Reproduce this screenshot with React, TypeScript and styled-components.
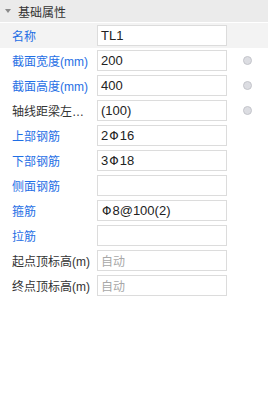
import React from 'react';
import styled, { createGlobalStyle } from 'styled-components';

const GlobalStyle = createGlobalStyle`
  html, body {
    margin: 0;
    padding: 0;
    background: #ffffff;
    font-family: "Liberation Sans", "Noto Sans CJK SC", sans-serif;
  }
`;

const Panel = styled.div`
  width: 268px;
  height: 402px;
  background: #ffffff;
  display: flex;
  flex-direction: column;
`;

const Header = styled.div`
  height: 22px;
  background: #ebebeb;
  border-bottom: 1px solid #ffffff;
  display: flex;
  align-items: center;
  padding-left: 5px;
  gap: 7px;
  font-family: "Noto Sans CJK SC", sans-serif;
  font-size: 12px;
  color: #333333;
`;

const Caret = styled.span`
  width: 0;
  height: 0;
  border-left: 3px solid transparent;
  border-right: 3px solid transparent;
  border-top: 4px solid #8a8a8a;
`;

const Row = styled.div<{ $active?: boolean }>`
  height: 25px;
  display: flex;
  align-items: center;
  background: ${(p) => (p.$active ? '#f3f3f3' : 'transparent')};
`;

const Label = styled.div<{ $blue?: boolean }>`
  width: 80px;
  padding-left: 12px;
  margin-right: 5px;
  white-space: nowrap;
  overflow: hidden;
  text-overflow: ellipsis;
  font-family: "Liberation Sans", "Noto Sans CJK SC", sans-serif;
  font-size: 12px;
  color: ${(p) => (p.$blue ? '#1f6fe5' : '#333333')};
`;

const Field = styled.div<{ $placeholder?: boolean }>`
  box-sizing: border-box;
  width: 130px;
  height: 21px;
  border: 1px solid #dcdcdc;
  background: #ffffff;
  padding-left: 3px;
  display: flex;
  align-items: center;
  font-family: "Liberation Sans", "Noto Sans CJK SC", sans-serif;
  font-size: ${(p) => (p.$placeholder ? '12px' : '13px')};
  color: ${(p) => (p.$placeholder ? '#a8a8a8' : '#222222')};
`;

const Steel = styled.span`
  font-family: "DejaVu Sans", sans-serif;
  font-size: 12px;
  margin: 0 1px;
`;

const Dot = styled.span`
  box-sizing: border-box;
  width: 9px;
  height: 9px;
  margin-left: 16px;
  border-radius: 50%;
  background: #dcdde2;
  border: 1px solid #c4c5cb;
`;

type Item = {
  label: string;
  value: string;
  blue?: boolean;
  dot?: boolean;
  placeholder?: boolean;
};

const items: Item[] = [
  { label: '名称', value: 'TL1', blue: true },
  { label: '截面宽度(mm)', value: '200', blue: true, dot: true },
  { label: '截面高度(mm)', value: '400', blue: true, dot: true },
  { label: '轴线距梁左边线距离(mm)', value: '(100)', dot: true },
  { label: '上部钢筋', value: '2#16', blue: true },
  { label: '下部钢筋', value: '3#18', blue: true },
  { label: '侧面钢筋', value: '', blue: true },
  { label: '箍筋', value: '#8@100(2)', blue: true },
  { label: '拉筋', value: '', blue: true },
  { label: '起点顶标高(m)', value: '自动', placeholder: true },
  { label: '终点顶标高(m)', value: '自动', placeholder: true },
];

const renderValue = (v: string) =>
  v.split('#').map((part, i) => (
    <React.Fragment key={i}>
      {i > 0 && <Steel>Φ</Steel>}
      {part}
    </React.Fragment>
  ));

const App = () => (
  <>
    <GlobalStyle />
    <Panel>
      <Header>
        <Caret />
        基础属性
      </Header>
      {items.map((it, i) => (
        <Row key={it.label} $active={i === 0}>
          <Label $blue={it.blue}>{it.label}</Label>
          <Field $placeholder={it.placeholder}>{renderValue(it.value)}</Field>
          {it.dot && <Dot />}
        </Row>
      ))}
    </Panel>
  </>
);

export default App;
